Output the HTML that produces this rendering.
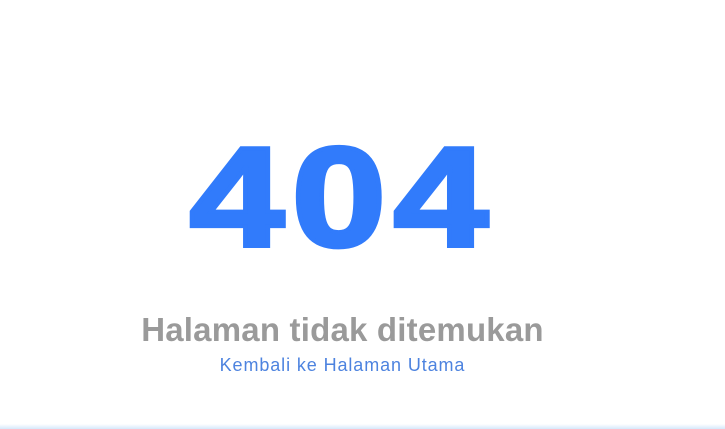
<!DOCTYPE html>
<html><head><meta charset="utf-8"><style>
html,body{margin:0;padding:0;width:725px;height:429px;overflow:hidden;background:#fff;font-family:"Liberation Sans",sans-serif}
.big,.h,.l{text-align:center;position:absolute;left:0;width:685px}
.big{top:127px;font-size:142px;font-weight:bold;color:#317bfb;line-height:1;letter-spacing:6px;transform:scaleX(1.2);transform-origin:center;-webkit-text-stroke:4px #317bfb}
.h{top:312px;font-size:33px;font-weight:bold;color:#9a9a9a;line-height:36px;letter-spacing:0.2px}
.l{top:354px;font-size:18px;color:#4d83df;line-height:22px;letter-spacing:0.9px}
.bar{position:absolute;left:0;bottom:0;width:725px;height:5px;background:linear-gradient(#fff,#d6e8fb)}
</style></head><body>
<div class="big">404</div>
<div class="h">Halaman tidak ditemukan</div>
<div class="l">Kembali ke Halaman Utama</div>
<div class="bar"></div>
</body></html>
